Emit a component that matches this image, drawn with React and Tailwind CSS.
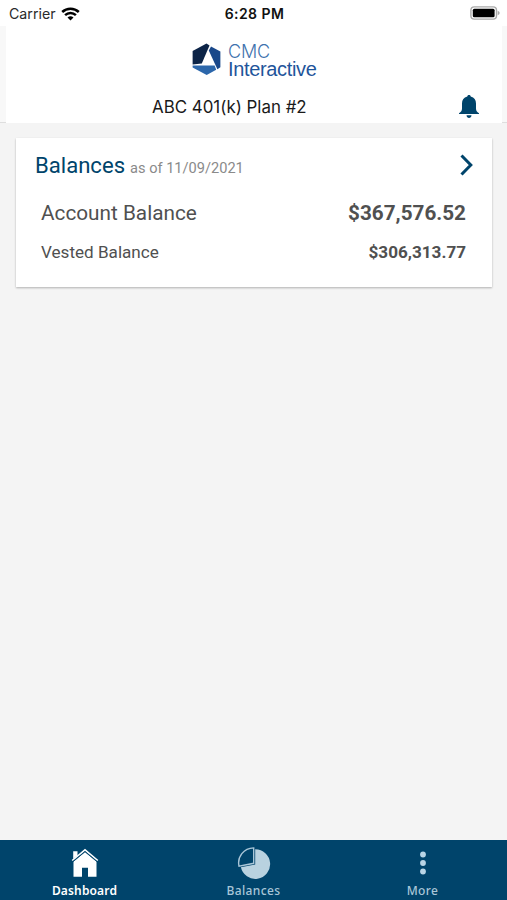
const BALANCES = [
  {
    id: 'account',
    label: 'Account Balance',
    amount: '$367,576.52',
    row: 'h-[43px] pt-[10px]',
    labelClass: 'text-[20.75px] leading-6',
    amountClass: 'text-[20.7px] leading-6'
  },
  {
    id: 'vested',
    label: 'Vested Balance',
    amount: '$306,313.77',
    row: 'h-[36px] pt-[6px]',
    labelClass: 'text-[17.1px] leading-6',
    amountClass: 'text-[17.1px] leading-6'
  }
]

const TABS = [
  { id: 'dashboard', label: 'Dashboard', icon: HomeIcon, className: 'font-semibold text-white tracking-[0.15px]' },
  { id: 'balances', label: 'Balances', icon: PieIcon, className: 'font-medium text-[#a9c6d8] tracking-[0.35px]' },
  { id: 'more', label: 'More', icon: MoreIcon, className: 'font-medium text-[#a9c6d8] tracking-[0.35px]' }
]

export default function App() {
  return (
    <div className="flex h-[900px] w-[507px] flex-col overflow-hidden bg-[#f4f4f4] font-['Roboto',sans-serif]">
      <StatusBar />
      <Header />
      <main className="flex-1 pt-[15px] pr-[15px] pl-[16px]">
        <BalancesCard />
      </main>
      <TabBar />
    </div>
  )
}

function StatusBar() {
  return (
    <div className="grid h-[26px] grid-cols-3 items-center bg-white pr-[7px] pl-[9px] font-['Inter',sans-serif]">
      <div className="flex items-center gap-[5px] pt-[2px]">
        <span className="text-[14.2px] leading-5 text-[#2a2a2a]">Carrier</span>
        <WifiIcon />
      </div>
      <span className="pt-[2px] text-center text-[14px] leading-5 font-semibold tracking-[0.45px] whitespace-nowrap text-[#111]">
        6:28 PM
      </span>
      <div className="flex justify-end">
        <BatteryIcon />
      </div>
    </div>
  )
}

function Header() {
  return (
    <div className="h-[97px] border-b border-[#dedede] bg-[#f8f8f8] pr-[5px] pl-[6px]">
      <header className="flex h-[97px] flex-col bg-white">
        <div className="flex h-[66px] items-start pt-[17px] pl-[186px]">
          <LogoMark />
          <div className="flex flex-col pl-[6px] whitespace-nowrap">
            <span className="h-[17px] font-['Inter',sans-serif] text-[18px] leading-[17px] font-light tracking-[-0.1px] text-[#3f73ae]">
              CMC
            </span>
            <span className="font-['Liberation_Sans',sans-serif] text-[20px] leading-[18px] tracking-[-0.35px] text-[#1f559b]">
              Interactive
            </span>
          </div>
        </div>
        <div className="flex items-start justify-between pr-[23px] pl-[146px]">
          <h1 className="pt-[3px] font-['Inter',sans-serif] text-[16.9px] leading-6 text-[#1a1a1a]">
            ABC 401(k) Plan #2
          </h1>
          <BellIcon />
        </div>
      </header>
    </div>
  )
}

function BalancesCard() {
  return (
    <section className="h-[149px] bg-white shadow-[0_1px_2px_rgba(0,0,0,0.28)]">
      <div className="flex h-[53px] items-start justify-between pt-[13px] pr-[18px] pl-[19px]">
        <div className="flex items-baseline gap-[5px] leading-7">
          <h2 className="text-[22.1px] text-[#00446b]">Balances</h2>
          <span className="text-[14.6px] text-[#8a8a8a]">as of 11/09/2021</span>
        </div>
        <ChevronIcon />
      </div>
      {BALANCES.map((item) => (
        <div
          key={item.id}
          className={`flex items-start justify-between pr-[26px] pl-[25px] text-[#505050] ${item.row}`}
        >
          <span className={item.labelClass}>{item.label}</span>
          <span className={`font-bold ${item.amountClass}`}>{item.amount}</span>
        </div>
      ))}
    </section>
  )
}

function TabBar() {
  return (
    <nav className="grid h-[60px] grid-cols-3 bg-[#00446b] font-['Noto_Sans',sans-serif]">
      {TABS.map(({ id, label, icon: Icon, className }) => (
        <div key={id} className={`flex flex-col items-center pt-[7px] ${className}`}>
          <Icon />
          <span className="text-[12px] leading-4">{label}</span>
        </div>
      ))}
    </nav>
  )
}

function WifiIcon() {
  return (
    <svg className="h-[14px] w-[19px]" viewBox="0 0 19 14" fill="none" stroke="#000" strokeWidth="2.5">
      <path d="M1.2 5a12 12 0 0 1 16.6 0" />
      <path d="M4.1 8.1a7.8 7.8 0 0 1 10.8 0" />
      <path d="M9.5 13.6 6.5 10.6a4.3 4.3 0 0 1 6 0Z" fill="#000" stroke="none" />
    </svg>
  )
}

function BatteryIcon() {
  return (
    <svg className="h-[14px] w-[30px]" viewBox="0 0 30 14">
      <rect x="0.9" y="0.9" width="25.6" height="12.2" rx="3.4" fill="#fff" stroke="#aaa" strokeWidth="1.4" />
      <rect x="2.8" y="2.7" width="21.8" height="8.6" rx="1.5" fill="#000" />
      <path d="M27.7 4.7v4.6q2-.8 2-2.3t-2-2.3Z" fill="#aaa" />
    </svg>
  )
}

function LogoMark() {
  return (
    <svg className="h-[33px] w-[30px]" viewBox="0 0 30 33">
      <path d="M.6 8 14.5.6l3 1.8L9.8 20.4.6 21.4Z" fill="#0c2447" />
      <path d="m19 3.4 9.4 5v15.8l-3 2L16.8 7.6Z" fill="#19488a" />
      <path d="M.6 22.5h22l1.6 4.2-9.5 5.2L.6 24.4Z" fill="#2c67ab" />
    </svg>
  )
}

function BellIcon() {
  return (
    <svg className="mt-[3px] h-[24px] w-[20px]" viewBox="0 0 20 24" fill="#00446b">
      <path d="M10 0c1 0 1.6.6 1.7 1.4 3.6.8 5.3 3.4 5.3 7v5.2c0 2.2.9 3.4 3 4.7v.8H0v-.8c2.1-1.3 3-2.5 3-4.7V8.4c0-3.6 1.7-6.2 5.3-7C8.4.6 9 0 10 0Z" />
      <path d="M7.5 20.300h5c-.2 1.700-1.100 2.600-2.500 2.600s-2.300-.9-2.500-2.600Z" />
    </svg>
  )
}

function ChevronIcon() {
  return (
    <svg className="mt-[3px] h-[22px] w-[15px]" viewBox="0 0 15 22" fill="none" stroke="#00446b" strokeWidth="3">
      <path d="m2.5 1.500 9.300 9.500-9.300 9.500" />
    </svg>
  )
}

function HomeIcon() {
  return (
    <svg className="h-[36px] w-[28px]" viewBox="0 0 28 36" fill="#fff">
      <path d="M2.200 4.200h4.300v4.300l-4.300 3.600Z" />
      <path d="M14 5 25.500 14.600V29.800H17v-9h-6v9H2.500V14.600Z" />
      <path d="M1.200 13.500 14 2.900l12.800 10.600" fill="none" stroke="#fff" strokeWidth="1.6" />
      <path d="M1.500 15.100 14 4.700l12.500 10.400" fill="none" stroke="#00446b" strokeWidth="0.8" />
    </svg>
  )
}

function PieIcon() {
  return (
    <svg className="h-[36px] w-[34px]" viewBox="0 0 34 36">
      <path d="M18.200 2.300a14.800 14.800 0 1 1-14.300 18l14.300-2.700Z" fill="#b9d2e0" />
      <path d="M16.700.9v15.400L2 19.100C0 9.700 6.700 1.200 16.700.9Z" fill="#00446b" stroke="#a9c6d8" strokeWidth="1.4" />
    </svg>
  )
}

function MoreIcon() {
  return (
    <svg className="h-[36px] w-[8px]" viewBox="0 0 8 36" fill="#b9d5e6">
      <circle cx="4" cy="7.5" r="2.9" />
      <circle cx="4" cy="16" r="2.9" />
      <circle cx="4" cy="24.5" r="2.9" />
    </svg>
  )
}
